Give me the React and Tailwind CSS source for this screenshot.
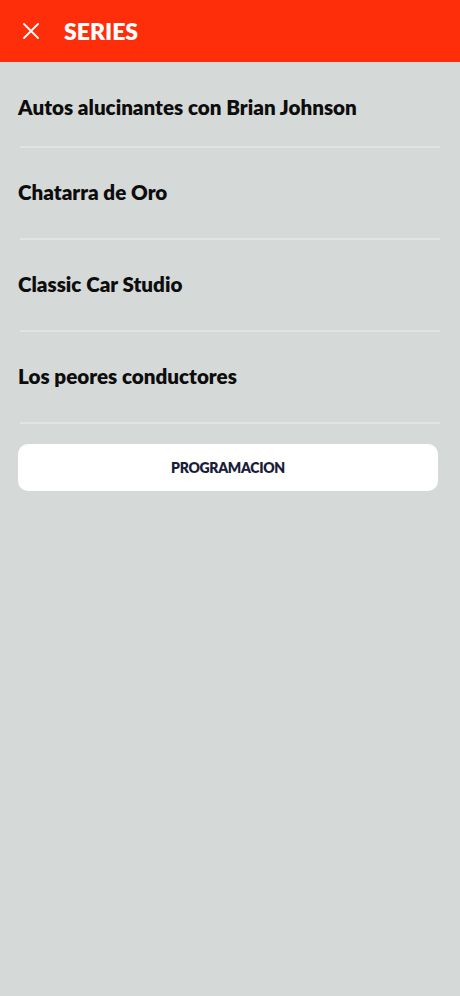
import React from "react";

const items = [
  "Autos alucinantes con Brian Johnson",
  "Chatarra de Oro",
  "Classic Car Studio",
  "Los peores conductores",
];

export default function App() {
  return (
    <div
      className="min-h-[996px] w-full bg-[#d5d9d8]"
      style={{ fontFamily: "Lato, 'Open Sans', sans-serif" }}
    >
      <header className="flex h-[62px] items-center bg-[#ff2e0a]">
        <div className="ml-[23px] flex h-[16px] w-[16px] items-center justify-center">
          <svg width="16" height="16" viewBox="0 0 16 16" fill="none">
            <path d="M1 1L15 15M15 1L1 15" stroke="#ffffff" strokeWidth="1.8" strokeLinecap="round" />
          </svg>
        </div>
        <h1 className="ml-[25px] text-[23px] font-extrabold leading-none text-white">SERIES</h1>
      </header>
      <div className="px-[20px]">
        {items.map((t, i) => (
          <div
            key={t}
            className={
              i === 0
                ? "border-b-2 border-[#e1e4e3] pt-[33px] pb-[27px]"
                : "border-b-2 border-[#e1e4e3] pt-[32px] pb-[34px]"
            }
          >
            <div className="-ml-[2px] text-[20.6px] font-extrabold leading-[24px] text-[#0d0d0d]">{t}</div>
          </div>
        ))}
      </div>
      <div className="px-[18px] pr-[22px] pt-[20px]">
        <button className="flex h-[47px] w-full items-center justify-center rounded-[10px] bg-white text-[14px] font-extrabold tracking-[-0.3px] text-[#1a1d3a]">
          PROGRAMACION
        </button>
      </div>
    </div>
  );
}
